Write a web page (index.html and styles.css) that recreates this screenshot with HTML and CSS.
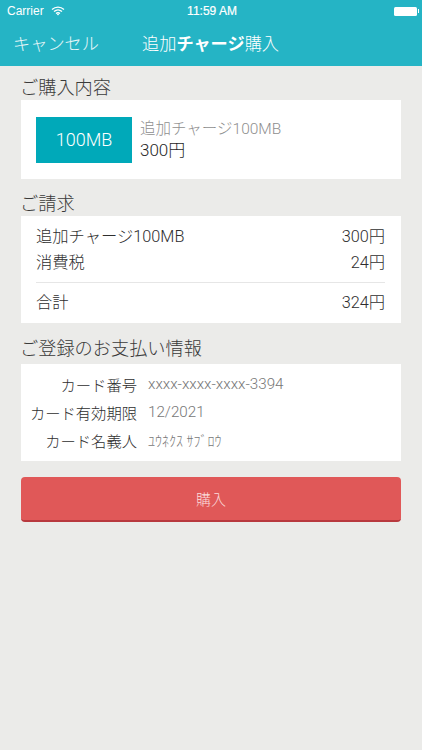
FILE: index.html
```html
<!DOCTYPE html>
<html lang="ja">
<head>
<meta charset="utf-8">
<title>追加チャージ購入</title>
<link rel="stylesheet" href="styles.css">
</head>
<body>
<header class="header">
  <div class="status">
    <div class="status-left">
      <span>Carrier</span>
      <svg class="wifi" viewBox="0 0 14 10" width="14" height="10"><path d="M1 3.600C4.500.4 9.500.4 13 3.600M3 5.600C5.400 3.500 8.600 3.500 11 5.600M5 7.500c1.200-.9 2.800-.9 4 0" fill="none" stroke="#fff" stroke-width="1.300"/><path d="M5.800 8.300 7 9.600l1.200-1.300c-.7-.5-1.700-.5-2.400 0z" fill="#fff"/></svg>
    </div>
    <div class="status-time">11:59 AM</div>
    <div class="status-right"><span class="battery"></span><span class="battery-tip"></span></div>
  </div>
  <nav class="nav">
    <span class="nav-cancel">キャンセル</span>
    <span class="nav-title">追加<b>チャージ</b>購入</span>
  </nav>
</header>
<main class="main">
  <h2 class="section-title purchase">ご購入内容</h2>
  <section class="card product">
    <div class="badge">100MB</div>
    <div class="product-text">
      <div class="product-name">追加チャージ100MB</div>
      <div class="product-price">300円</div>
    </div>
  </section>
  <h2 class="section-title billing">ご請求</h2>
  <section class="card bill">
    <div class="bill-row"><span>追加チャージ100MB</span><span>300円</span></div>
    <div class="bill-row"><span>消費税</span><span>24円</span></div>
    <div class="bill-row total"><span>合計</span><span>324円</span></div>
  </section>
  <h2 class="section-title payment">ご登録のお支払い情報</h2>
  <section class="card pay">
    <div class="pay-row"><span class="pay-label">カード番号</span><span class="pay-value">xxxx-xxxx-xxxx-3394</span></div>
    <div class="pay-row"><span class="pay-label">カード有効期限</span><span class="pay-value">12/2021</span></div>
    <div class="pay-row"><span class="pay-label">カード名義人</span><span class="pay-value kana">ﾕｳﾈｸｽ ｻﾌﾞﾛｳ</span></div>
  </section>
  <button class="buy">購入</button>
</main>
</body>
</html>
```
FILE: styles.css
```css
* { box-sizing: border-box; }
html, body { margin: 0; height: 100%; }
body {
  background: #ebebe9;
  font-family: Roboto, "Noto Sans CJK JP", sans-serif;
  font-weight: 300;
  color: #333;
  overflow: hidden;
}
.header { background: #25b4c5; color: #fff; height: 66px; }
.status {
  height: 22px;
  display: grid;
  grid-template-columns: 1fr auto 1fr;
  align-items: center;
  padding: 0 3px 0 7px;
  font-family: "Liberation Sans", sans-serif;
  font-size: 12px;
}
.status-left { display: flex; align-items: center; gap: 7px; }
.wifi { display: block; }
.status-time { font-size: 12px; -webkit-text-stroke: .2px #fff; margin-left: -2px; }
.status-right { display: flex; justify-content: flex-end; align-items: center; }
.battery { width: 23px; height: 9px; background: #fff; border-radius: 1.500px; }
.battery-tip { width: 1.500px; height: 4px; background: #fff; margin-left: 1px; }
.nav { height: 44px; display: flex; align-items: center; padding: 0 0 4px 13px; }
.nav-cancel { font-size: 17.200px; width: 129px; color: #e6f6f8; }
.nav-title { font-size: 17.200px; }
.nav-title b { font-weight: 700; }
.main { padding: 0 21px; }
.section-title { margin: 0 0 0 -1px; font-size: 18.200px; font-weight: 300; line-height: 24px; color: #3a3a3a; }
.section-title.purchase { height: 34px; padding-top: 10px; }
.section-title.billing { height: 37px; padding-top: 13px; }
.section-title.payment { height: 41px; padding-top: 14px; }
.card { background: #fff; }
.product { height: 79px; display: flex; align-items: center; padding: 0 15px; gap: 8px; }
.badge {
  width: 96px; height: 46px; background: #00a9b9;
  color: #fff; display: flex; align-items: center; justify-content: center; font-size: 18px;
}
.product-text { display: flex; flex-direction: column; }
.product-name { font-size: 15.500px; line-height: 21px; color: #8f8f8f; }
.product-price { font-size: 17px; line-height: 21px; color: #1f1f1f; }
.bill { height: 107px; padding: 8px 16px 0 15px; }
.bill-row { display: flex; justify-content: space-between; font-size: 16.300px; line-height: 26px; height: 26px; color: #2e2e2e; }
.bill-row.total { margin-top: 6px; border-top: 1px solid #e6e6e6; padding-top: 7px; height: 34px; }
.pay { height: 97px; padding: 6px 0 0; }
.pay-row { display: flex; align-items: center; height: 28px; }
.pay-label { width: 116px; margin-right: 11px; text-align: right; font-size: 15.300px; color: #2e2e2e; white-space: nowrap; }
.pay-value { font-size: 15.200px; color: #777; }
.pay-value.kana { font-size: 14px; }
.buy {
  display: block; width: 100%; height: 45px; margin-top: 16px;
  background: #e05858; border: 0; border-bottom: 2px solid #b8393e; border-radius: 4px;
  color: #fbdcdc; font: inherit; font-size: 15px; padding: 0;
}
```
